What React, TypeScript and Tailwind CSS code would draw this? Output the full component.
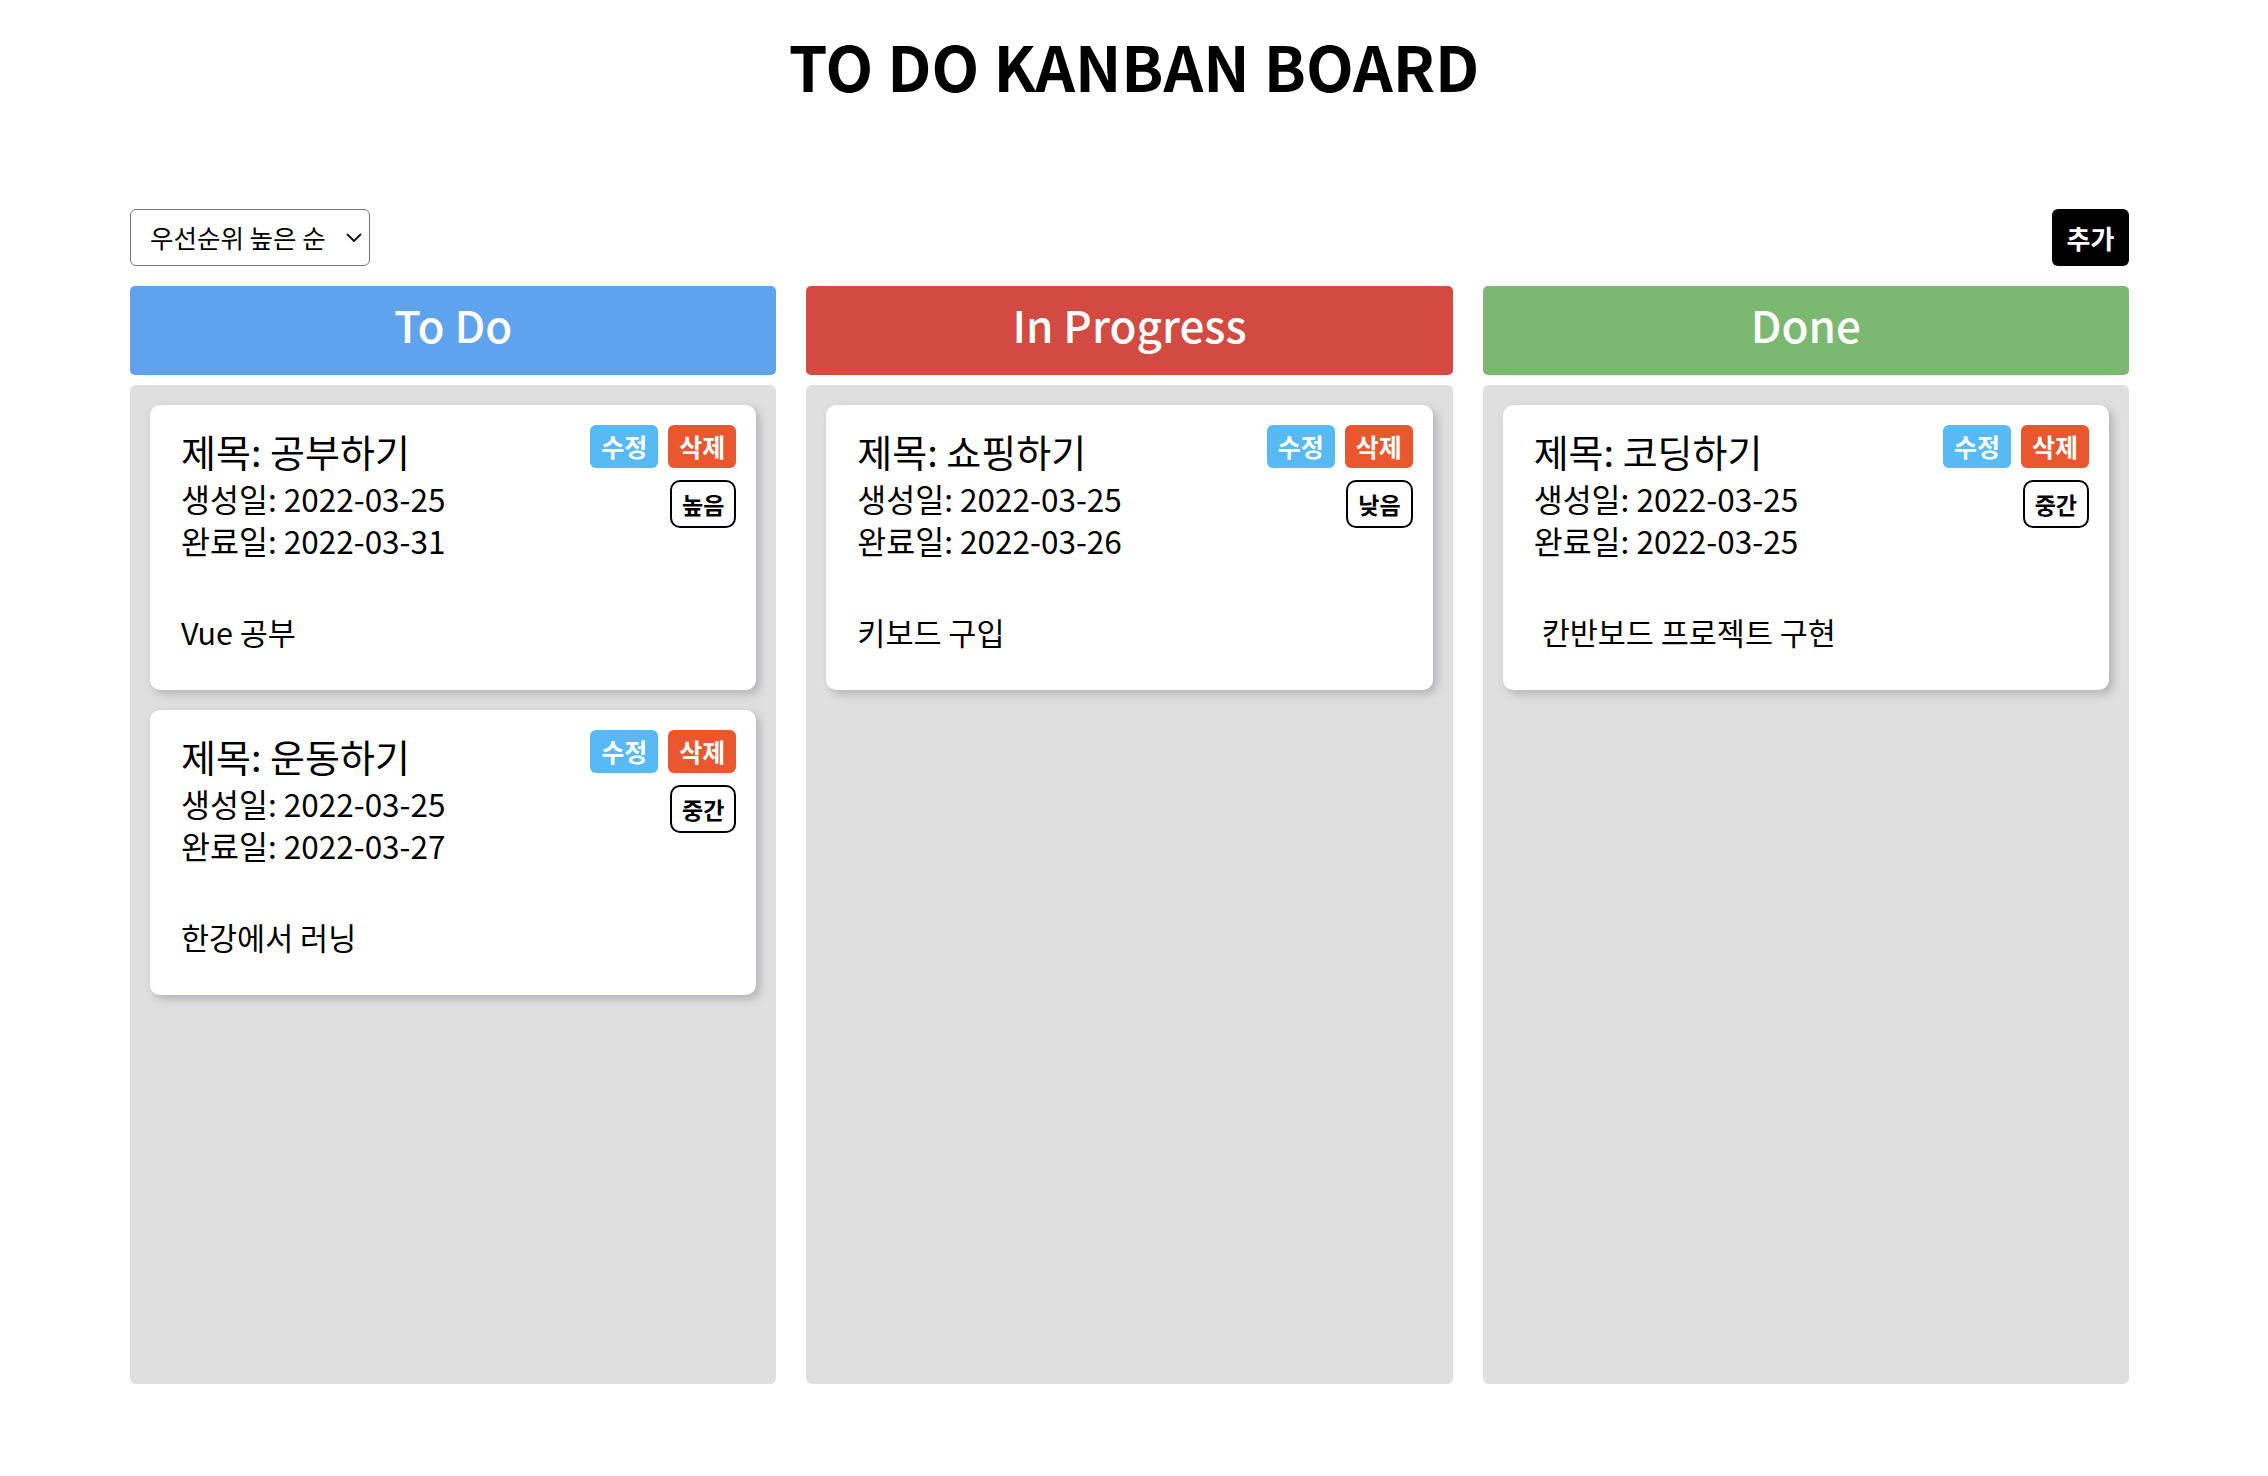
import React from "react";

type Card = {
  title: string;
  created: string;
  due: string;
  desc: string;
  priority: string;
  descIndent?: boolean;
};

const columns: { name: string; color: string; cards: Card[] }[] = [
  {
    name: "To Do",
    color: "bg-[#5fa3ef]",
    cards: [
      { title: "제목: 공부하기", created: "2022-03-25", due: "2022-03-31", desc: "Vue 공부", priority: "높음" },
      { title: "제목: 운동하기", created: "2022-03-25", due: "2022-03-27", desc: "한강에서 러닝", priority: "중간" },
    ],
  },
  {
    name: "In Progress",
    color: "bg-[#d24a41]",
    cards: [
      { title: "제목: 쇼핑하기", created: "2022-03-25", due: "2022-03-26", desc: "키보드 구입", priority: "낮음" },
    ],
  },
  {
    name: "Done",
    color: "bg-[#7bb872]",
    cards: [
      { title: "제목: 코딩하기", created: "2022-03-25", due: "2022-03-25", desc: "칸반보드 프로젝트 구현", priority: "중간", descIndent: true },
    ],
  },
];

function CardView({ c }: { c: Card }) {
  return (
    <div className="flex justify-between rounded-[10px] bg-white pl-[31px] pr-[20px] pt-[20px] pb-[37px] shadow-[4px_4px_8px_rgba(80,80,100,0.3)]">
      <div className="text-black">
        <h3 className="text-[38px] leading-[52px] font-normal">{c.title}</h3>
        <p className="text-[31.5px] leading-[42px]">생성일: {c.created}</p>
        <p className="text-[31.5px] leading-[42px]">완료일: {c.due}</p>
        <p className={`mt-[50px] text-[30.5px] leading-[42px] ${c.descIndent ? "pl-[8px]" : ""}`}>{c.desc}</p>
      </div>
      <div className="flex flex-col items-end gap-[12px]">
        <div className="flex gap-[10px]">
          <button className="h-[43px] rounded-[6px] bg-[#57baf5] px-[11px] text-[25px] font-bold leading-[43px] text-white">
            수정
          </button>
          <button className="h-[43px] rounded-[6px] bg-[#ea572e] px-[11px] text-[25px] font-bold leading-[43px] text-white">
            삭제
          </button>
        </div>
        <span className="flex h-[48px] items-center rounded-[10px] border-[2px] border-black px-[10px] text-[23px] font-bold text-black">
          {c.priority}
        </span>
      </div>
    </div>
  );
}

export default function App() {
  return (
    <div className="min-h-screen bg-white font-['Noto_Sans_CJK_KR','Noto_Sans',sans-serif] text-black">
      <h1 className="pt-[20px] text-center text-[62px] font-bold leading-[90px]">TO DO KANBAN BOARD</h1>
      <div className="ml-[130px] w-[1999px]">
        <div className="mt-[99px] flex items-center justify-between">
          <div className="relative">
            <select className="h-[57px] w-[240px] appearance-none rounded-[6px] border-[1.5px] border-[#767676] bg-white pl-[19px] text-[25.5px] text-black outline-none">
              <option>우선순위 높은 순</option>
              <option>우선순위 낮은 순</option>
            </select>
            <svg
              className="pointer-events-none absolute right-[8px] top-[24px]"
              width="16"
              height="10"
              viewBox="0 0 16 10"
              fill="none"
            >
              <path d="M1.5 1.5 L8 8 L14.5 1.5" stroke="#111" strokeWidth="1.8" strokeLinecap="round" strokeLinejoin="round" />
            </svg>
          </div>
          <button className="h-[57px] w-[77px] rounded-[6px] bg-black text-[26px] font-bold text-white">추가</button>
        </div>
        <div className="mt-[20px] grid grid-cols-3 gap-[30px]">
          {columns.map((col) => (
            <div key={col.name} className="flex flex-col gap-[10px]">
              <div className={`flex h-[89px] items-center justify-center rounded-[5px] pb-[14px] ${col.color}`}>
                <span className="text-[44px] font-medium text-white">{col.name}</span>
              </div>
              <div className="flex h-[999px] flex-col gap-[20px] rounded-[6px] bg-[#dfdfdf] p-[20px]">
                {col.cards.map((c) => (
                  <CardView key={c.title} c={c} />
                ))}
              </div>
            </div>
          ))}
        </div>
      </div>
    </div>
  );
}
